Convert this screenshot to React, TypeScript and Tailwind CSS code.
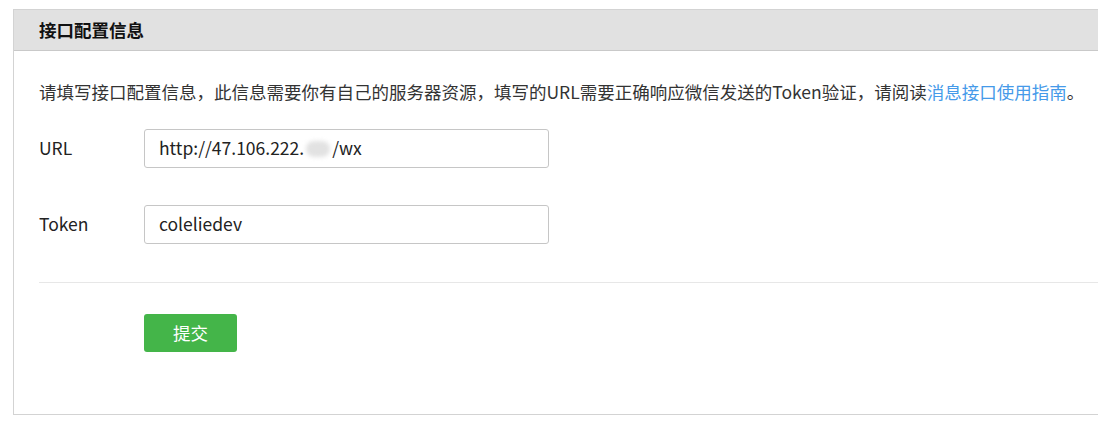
export default function App() {
  const font = {
    fontFamily: '"Noto Sans CJK SC", "Noto Sans", sans-serif',
  };
  return (
    <div
      className="h-[428px] w-[1098px] overflow-hidden bg-white pl-[13px] pt-[9px] text-[#222]"
      style={font}
    >
      <div className="w-[1100px] border border-[#d3d3d3] bg-white">
        {/* header */}
        <div className="flex h-[41px] items-center border-b border-[#c9c9c9] bg-[#e1e1e1] pl-[25px]">
          <h2 className="text-[17.5px] font-bold text-[#111]">接口配置信息</h2>
        </div>

        <div className="pl-[25px] pt-[29px] pb-[62px]">
          <p className="text-[17.5px] leading-[24px] text-[#333]">
            请填写接口配置信息，此信息需要你有自己的服务器资源，填写的URL需要正确响应微信发送的Token验证，请阅读
            <a className="text-[#459ae9]">消息接口使用指南</a>。
          </p>

          {/* form rows */}
          <div className="mt-[25px] flex flex-col gap-[37px]">
            <div className="flex items-center">
              <label className="w-[105px] text-[17.5px] text-[#222]">URL</label>
              <div className="flex h-[39px] w-[405px] items-center rounded-[3px] border border-[#c6c6c6] pl-[14px] text-[17.5px] text-[#222]">
                <span>http://47.106.222.</span>
                <span className="mx-[2px] inline-block h-[16px] w-[24px] rounded-full bg-[#e2e2e2] blur-[2px]" />
                <span>/wx</span>
              </div>
            </div>
            <div className="flex items-center">
              <label className="w-[105px] text-[17.5px] text-[#222]">Token</label>
              <div className="flex h-[39px] w-[405px] items-center rounded-[3px] border border-[#c6c6c6] pl-[14px] text-[17.5px] text-[#222]">
                coleliedev
              </div>
            </div>
          </div>

          <div className="mt-[38px] h-px bg-[#e7e7e7]" />

          <button className="ml-[105px] mt-[31px] flex h-[38px] w-[93px] items-center justify-center rounded-[3px] bg-[#44b549] text-[17.5px] text-white">
            提交
          </button>
        </div>
      </div>
    </div>
  );
}
